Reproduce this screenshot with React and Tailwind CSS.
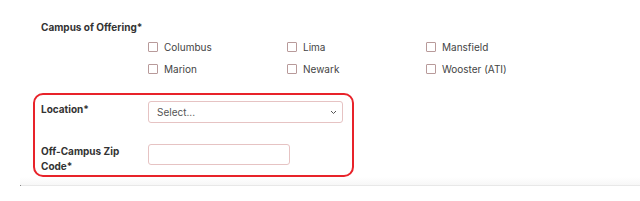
import React from "react";

const campuses = [
  ["Columbus", "Lima", "Mansfield"],
  ["Marion", "Newark", "Wooster (ATI)"],
];

function Check({ label }) {
  return (
    <label className="flex items-center gap-[6px] w-[139px]">
      <span className="block w-[10px] h-[10px] border border-[#b89a9a] rounded-[1px] bg-white" />
      <span className="text-[10px] leading-[14px] text-[#444]">{label}</span>
    </label>
  );
}

export default function App() {
  return (
    <div
      className="w-[640px] h-[201px] bg-white relative overflow-hidden"
      style={{ fontFamily: "Inter, 'Noto Sans', sans-serif" }}
    >
      <div className="pt-[20px] pl-[41px]">
        <div className="text-[10px] leading-[14px] font-bold text-[#333]">
          Campus of Offering*
        </div>
      </div>
      <div className="pl-[148px] pt-[6px] flex flex-col gap-[8px]">
        {campuses.map((row, i) => (
          <div key={i} className="flex">
            {row.map((c) => (
              <Check key={c} label={c} />
            ))}
          </div>
        ))}
      </div>
      <div className="ml-[33px] mt-[17px] w-[321px] h-[84px] border-2 border-[#e8232a] rounded-[10px] pt-[6px] pl-[6px]">
        <div className="flex">
          <div className="w-[107px] text-[10px] leading-[15px] font-bold text-[#333] pt-[1px]">
            Location*
          </div>
          <div className="w-[195px] h-[22px] border border-[#e6c3c3] rounded-[3px] flex items-center justify-between pl-[8px] pr-[5px]">
            <span className="text-[10px] text-[#555]">Select...</span>
            <svg width="7" height="5" viewBox="0 0 7 5" fill="none">
              <path d="M1 1l2.5 2.5L6 1" stroke="#555" strokeWidth="1" />
            </svg>
          </div>
        </div>
        <div className="flex mt-[21px]">
          <div className="w-[107px] text-[10px] leading-[15px] font-bold text-[#333]">
            Off-Campus Zip
            <br />
            Code*
          </div>
          <div className="w-[142px] h-[21px] border border-[#e6c3c3] rounded-[3px]" />
        </div>
      </div>
      <div className="ml-[20px] mt-[8px] h-[1px] bg-[#e8e8e8] relative">
        <div className="absolute left-0 top-[-8px] right-0 h-[8px] bg-gradient-to-b from-transparent to-[#f7f7f7]" />
        <div className="absolute left-0 top-0 w-[1px] h-[1px] bg-[#888]" />
      </div>
    </div>
  );
}
